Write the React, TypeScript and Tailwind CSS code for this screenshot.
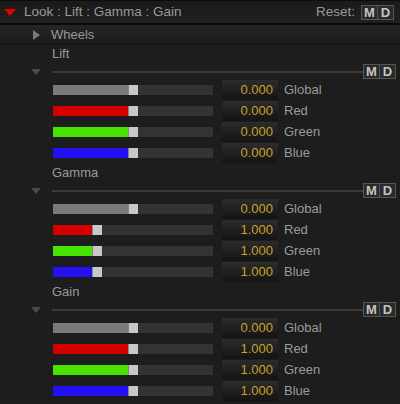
import React from 'react';

type Channel = { name: string; value: string; fill: number; color: string };

const font = { fontFamily: '"Liberation Sans", Arial, sans-serif' };

const MDButtons: React.FC = () => (
  <div className="flex">
    <div className="w-[17px] h-[15px] flex items-center justify-center border border-[#555] bg-[#2a2a2a] text-[#c4c4c4] text-[13px] font-bold leading-none">
      M
    </div>
    <div className="w-[16px] h-[15px] flex items-center justify-center border border-l-0 border-[#555] bg-[#2a2a2a] text-[#c4c4c4] text-[13px] font-bold leading-none">
      D
    </div>
  </div>
);

const SliderRow: React.FC<{ ch: Channel }> = ({ ch }) => (
  <div className="h-[20px] flex items-center">
    <div className="ml-[53px] w-[160px] h-[10px] bg-[#333333] flex">
      <div className="h-full" style={{ width: ch.fill, backgroundColor: ch.color }} />
      <div className="w-[10px] h-full bg-[#c8c8c8] border-l border-[#888]" />
    </div>
    <div className="ml-[9px] w-[56px] h-[20px] bg-gradient-to-b from-[#2c2c2c] to-[#141414] flex items-center justify-end pr-[5px] text-[#c9a227] text-[13px]">
      {ch.value}
    </div>
    <div className="ml-[6px] text-[#9b9b9b] text-[13px]">{ch.name}</div>
  </div>
);

const Section: React.FC<{ title: string; channels: Channel[] }> = ({ title, channels }) => (
  <div className="h-[119px] flex flex-col">
    <div className="h-[18px] flex items-center pl-[52px] text-[#9b9b9b] text-[13px]">{title}</div>
    <div className="h-[17px] flex items-center">
      <div className="ml-[31px] w-0 h-0 border-l-[5px] border-r-[5px] border-t-[6px] border-l-transparent border-r-transparent border-t-[#4a4a4a]" />
      <div className="ml-[11px] flex-1 h-[2px] bg-[#3a3a3a]" />
      <div className="mr-[4px]">
        <MDButtons />
      </div>
    </div>
    <div className="flex flex-col gap-[1px]">
      {channels.map((c) => (
        <SliderRow key={c.name} ch={c} />
      ))}
    </div>
  </div>
);

const GRAY = '#7a7a7a';
const RED = '#d40000';
const GREEN = '#48e400';
const BLUE = '#2410f4';

const lift: Channel[] = [
  { name: 'Global', value: '0.000', fill: 75, color: GRAY },
  { name: 'Red', value: '0.000', fill: 75, color: RED },
  { name: 'Green', value: '0.000', fill: 75, color: GREEN },
  { name: 'Blue', value: '0.000', fill: 75, color: BLUE },
];

const gamma: Channel[] = [
  { name: 'Global', value: '0.000', fill: 75, color: GRAY },
  { name: 'Red', value: '1.000', fill: 39, color: RED },
  { name: 'Green', value: '1.000', fill: 39, color: GREEN },
  { name: 'Blue', value: '1.000', fill: 39, color: BLUE },
];

const gain: Channel[] = [
  { name: 'Global', value: '0.000', fill: 75, color: GRAY },
  { name: 'Red', value: '1.000', fill: 75, color: RED },
  { name: 'Green', value: '1.000', fill: 75, color: GREEN },
  { name: 'Blue', value: '1.000', fill: 75, color: BLUE },
];

export default function App() {
  return (
    <div className="w-[400px] h-[404px] bg-[#1d1d1d] overflow-hidden flex flex-col" style={font}>
      <div className="h-[23px] flex items-center bg-gradient-to-b from-[#1a1a1a] to-[#202020] border-t border-[#0c0c0c]">
        <div className="ml-[4px] w-0 h-0 border-l-[6px] border-r-[6px] border-t-[7px] border-l-transparent border-r-transparent border-t-[#e00000]" />
        <div className="ml-[8px] text-[#9a9a9a] text-[13.5px]">Look : Lift : Gamma : Gain</div>
        <div className="ml-auto mr-[6px] text-[#9a9a9a] text-[13.5px]">Reset:</div>
        <div className="mr-[6px]">
          <MDButtons />
        </div>
      </div>
      <div className="h-[2px] bg-[#0a0a0a]" />
      <div className="h-[20px] flex items-center bg-gradient-to-b from-[#262626] to-[#1a1a1a] border-b border-[#111]">
        <div className="ml-[33px] w-0 h-0 border-t-[5px] border-b-[5px] border-l-[7px] border-t-transparent border-b-transparent border-l-[#7a7a7a]" />
        <div className="ml-[11px] text-[#9a9a9a] text-[13px]">Wheels</div>
      </div>
      <Section title="Lift" channels={lift} />
      <Section title="Gamma" channels={gamma} />
      <Section title="Gain" channels={gain} />
    </div>
  );
}
